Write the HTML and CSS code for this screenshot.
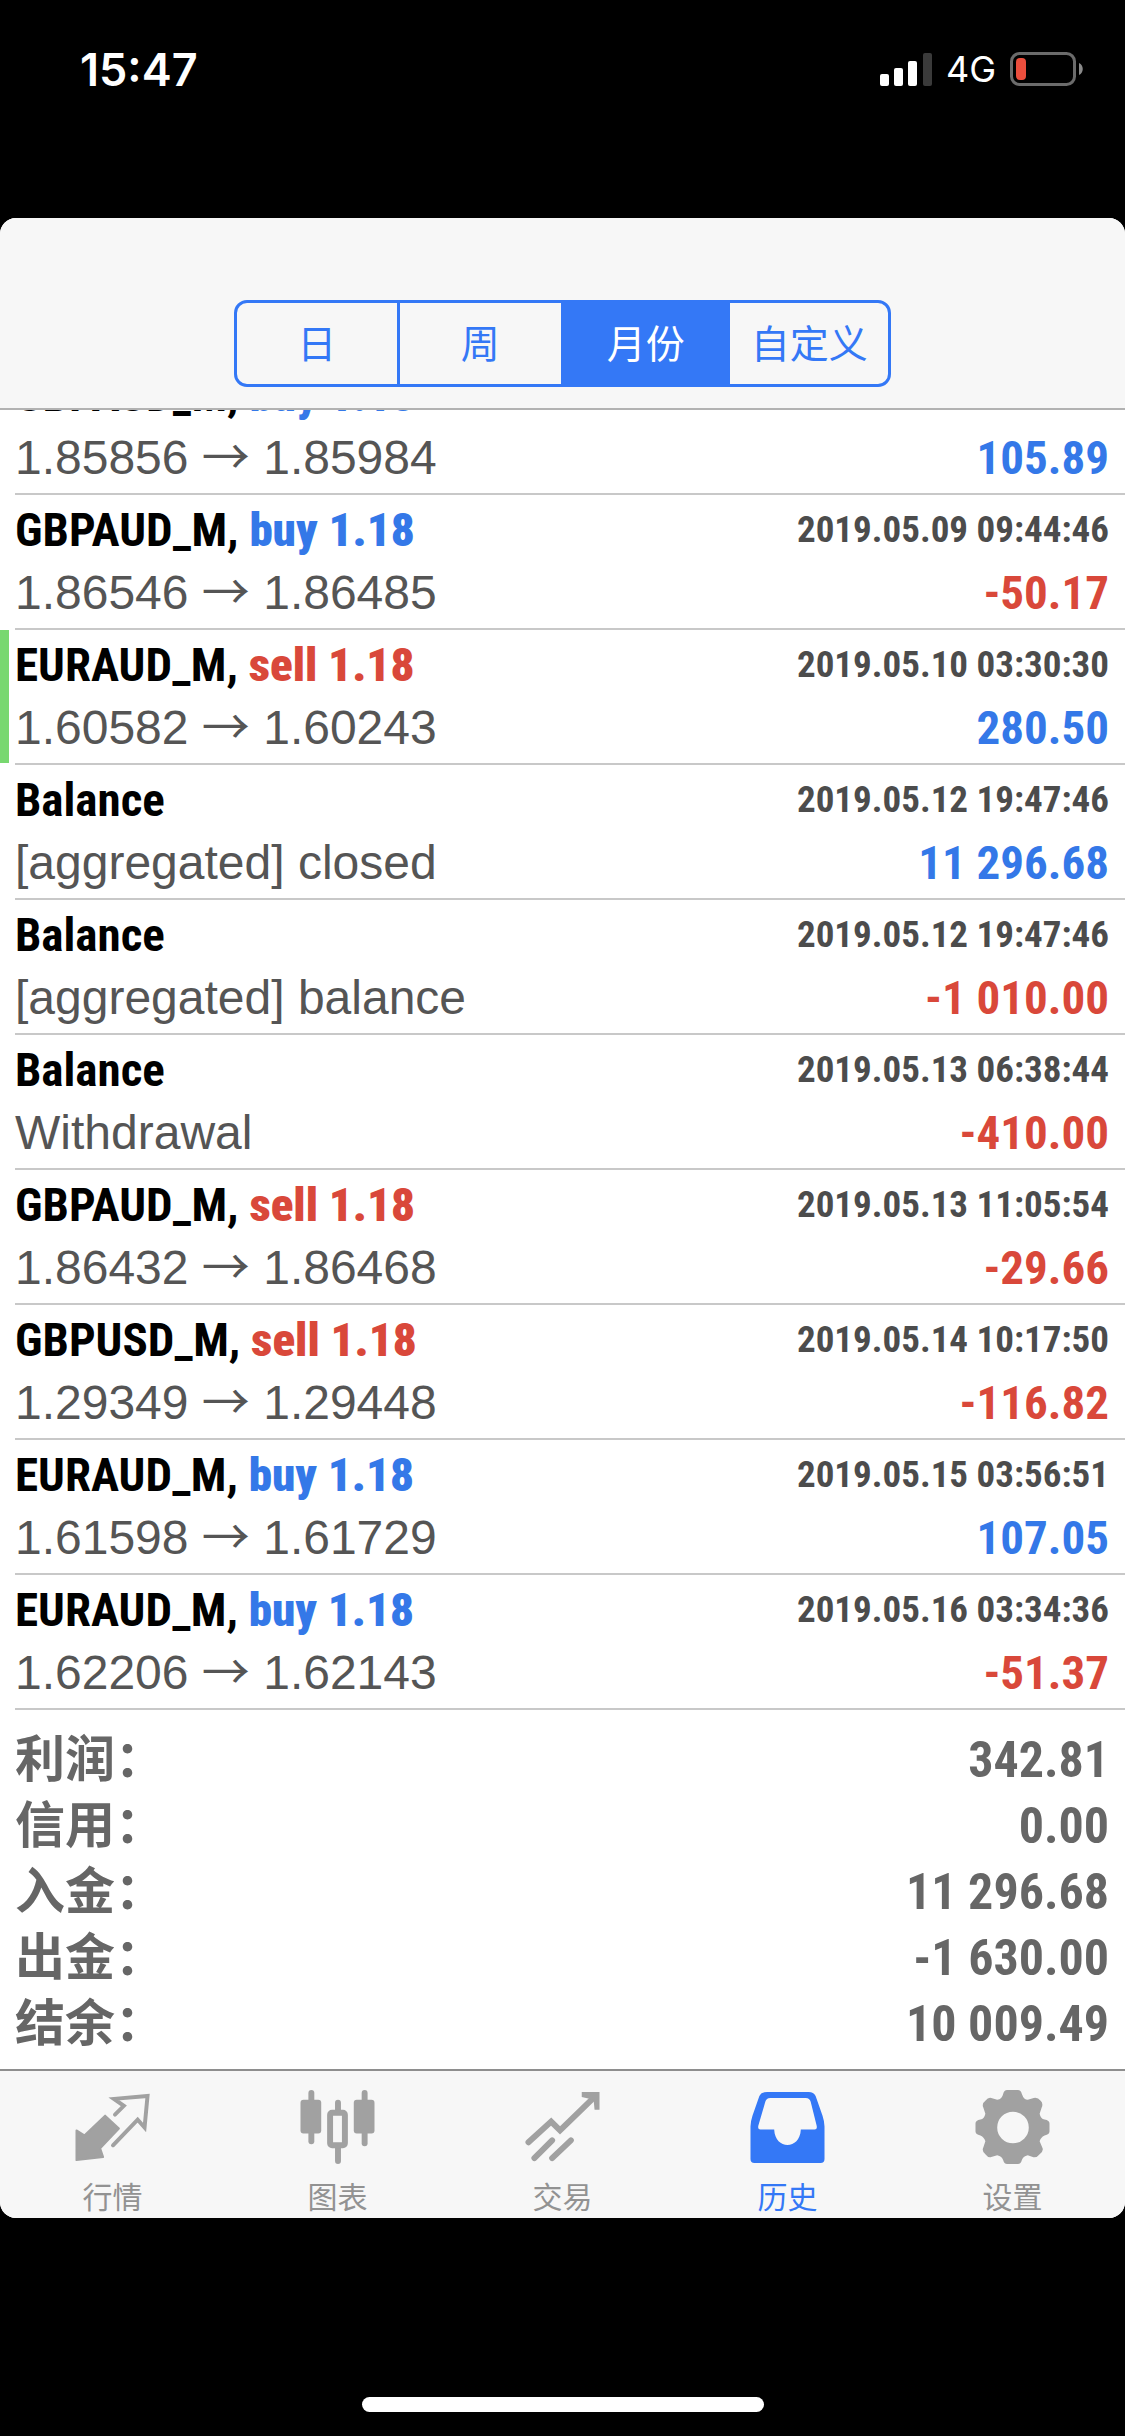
FILE: index.html
```html
<!DOCTYPE html>
<html lang="zh-CN">
<head>
<meta charset="utf-8">
<meta name="viewport" content="width=device-width, initial-scale=1">
<title>历史</title>
<link rel="stylesheet" href="styles.css">
</head>
<body>
<div class="status">
  <time class="clock">15:47</time>
  <div class="status-right">
    <svg class="signal" viewBox="0 0 52 33" aria-hidden="true">
      <rect x="0" y="21" width="9" height="12" rx="2" fill="#fff"/>
      <rect x="14" y="15" width="9" height="18" rx="2" fill="#fff"/>
      <rect x="28" y="8" width="9" height="25" rx="2" fill="#fff"/>
      <rect x="43" y="0" width="9" height="33" rx="2" fill="#3a3a3a"/>
    </svg>
    <span class="network">4G</span>
    <svg class="battery" viewBox="0 0 74 34" aria-hidden="true">
      <rect x="1.5" y="1.5" width="63" height="31" rx="8" fill="none" stroke="#6b6b6b" stroke-width="3"/>
      <rect x="6" y="6" width="10" height="22" rx="4" fill="#eb4e3d"/>
      <path d="M69 11c5 2 5 10 0 12z" fill="#8a8a8a"/>
    </svg>
  </div>
</div>

<div class="app">
  <header class="header">
    <div class="segments">
      <button type="button" class="segment">日</button>
      <button type="button" class="segment">周</button>
      <button type="button" class="segment active" aria-pressed="true">月份</button>
      <button type="button" class="segment">自定义</button>
    </div>
  </header>

  <main class="content">
    <ul class="deals">
      <li class="deal"><span class="title">GBPAUD_M, <b class="buy">buy 1.18</b></span><time class="date"></time><span class="detail">1.85856 <span class="arrow">→</span> 1.85984</span><span class="amount buy">105.89</span></li>
      <li class="deal"><span class="title">GBPAUD_M, <b class="buy">buy 1.18</b></span><time class="date">2019.05.09 09:44:46</time><span class="detail">1.86546 <span class="arrow">→</span> 1.86485</span><span class="amount sell">-50.17</span></li>
      <li class="deal take-profit"><span class="title">EURAUD_M, <b class="sell">sell 1.18</b></span><time class="date">2019.05.10 03:30:30</time><span class="detail">1.60582 <span class="arrow">→</span> 1.60243</span><span class="amount buy">280.50</span></li>
      <li class="deal"><span class="title">Balance</span><time class="date">2019.05.12 19:47:46</time><span class="detail">[aggregated] closed</span><span class="amount buy">11 296.68</span></li>
      <li class="deal"><span class="title">Balance</span><time class="date">2019.05.12 19:47:46</time><span class="detail">[aggregated] balance</span><span class="amount sell">-1 010.00</span></li>
      <li class="deal"><span class="title">Balance</span><time class="date">2019.05.13 06:38:44</time><span class="detail">Withdrawal</span><span class="amount sell">-410.00</span></li>
      <li class="deal"><span class="title">GBPAUD_M, <b class="sell">sell 1.18</b></span><time class="date">2019.05.13 11:05:54</time><span class="detail">1.86432 <span class="arrow">→</span> 1.86468</span><span class="amount sell">-29.66</span></li>
      <li class="deal"><span class="title">GBPUSD_M, <b class="sell">sell 1.18</b></span><time class="date">2019.05.14 10:17:50</time><span class="detail">1.29349 <span class="arrow">→</span> 1.29448</span><span class="amount sell">-116.82</span></li>
      <li class="deal"><span class="title">EURAUD_M, <b class="buy">buy 1.18</b></span><time class="date">2019.05.15 03:56:51</time><span class="detail">1.61598 <span class="arrow">→</span> 1.61729</span><span class="amount buy">107.05</span></li>
      <li class="deal"><span class="title">EURAUD_M, <b class="buy">buy 1.18</b></span><time class="date">2019.05.16 03:34:36</time><span class="detail">1.62206 <span class="arrow">→</span> 1.62143</span><span class="amount sell">-51.37</span></li>
    </ul>
    <dl class="totals">
      <div class="total"><dt>利润：</dt><dd>342.81</dd></div>
      <div class="total"><dt>信用：</dt><dd>0.00</dd></div>
      <div class="total"><dt>入金：</dt><dd>11 296.68</dd></div>
      <div class="total"><dt>出金：</dt><dd>-1 630.00</dd></div>
      <div class="total"><dt>结余：</dt><dd>10 009.49</dd></div>
    </dl>
  </main>

  <nav class="tabs">
    <a class="tab" href="#quotes">
      <svg class="icon" viewBox="0 0 75 76" aria-hidden="true">
        <path d="M1 41 9 46 30 26 44 39 25 59 28 68 1 71z" fill="currentColor" stroke="currentColor" stroke-width="2" stroke-linejoin="round"/>
        <path d="M40 25 49 16 39 9 73 6 70 38 63 30 38 56" fill="none" stroke="currentColor" stroke-width="4" stroke-linecap="round"/>
      </svg>
      <span>行情</span>
    </a>
    <a class="tab" href="#charts">
      <svg class="icon" viewBox="0 0 75 76" aria-hidden="true">
        <g fill="currentColor">
          <rect x="8" y="0" width="6" height="55" rx="3"/><rect x="0" y="10" width="21" height="34" rx="3"/>
          <rect x="62" y="0" width="6" height="57" rx="3"/><rect x="54" y="10" width="21" height="34" rx="3"/>
          <rect x="35" y="10" width="6" height="15" rx="3"/><rect x="35" y="54" width="6" height="21" rx="3"/>
        </g>
        <rect x="30" y="23" width="15" height="33" rx="2" fill="none" stroke="currentColor" stroke-width="6"/>
      </svg>
      <span>图表</span>
    </a>
    <a class="tab" href="#trade">
      <svg class="icon" viewBox="0 0 75 76" aria-hidden="true">
        <path d="M3 53 26 32 35 41 71 6M9 69 27 51M27 69 46 51" fill="none" stroke="currentColor" stroke-width="6" stroke-linecap="round"/>
        <path d="M57 2H75V20L70 20 69 10 57 7z" fill="currentColor"/>
      </svg>
      <span>交易</span>
    </a>
    <a class="tab active" href="#history" aria-current="page">
      <svg class="icon" viewBox="0 0 75 76" aria-hidden="true">
        <path fill="currentColor" fill-rule="evenodd" d="M17 2H59Q64 2 66 6L73 26Q75 32 75 37V70Q75 74 71 74H4Q0 74 0 70V37Q0 32 2 26L9 6Q11 2 17 2zM20 8Q16 8 15 12L8 36Q7 40 10 40H24C25 61 50 61 51 40H65Q68 40 67 36L61 12Q60 8 56 8z"/>
      </svg>
      <span>历史</span>
    </a>
    <a class="tab" href="#settings">
      <svg class="icon" viewBox="0 0 75 76" aria-hidden="true">
        <path fill="currentColor" fill-rule="evenodd" d="M32 0H43Q46 0 47 4Q49 10 53 10L59 8Q63 7 66 11Q69 14 67 18L65 24Q66 29 70 30Q75 31 75 34V42Q75 45 70 46Q66 48 65 52L68 59Q69 62 65 65Q62 69 58 68L53 66Q48 67 47 71Q46 75 43 75H32Q29 75 28 71Q27 67 22 66L16 68Q13 69 10 65Q6 62 8 58L10 52Q9 48 5 46Q0 45 0 42V34Q0 31 5 30Q9 29 10 24L8 18Q6 14 10 11Q13 7 16 8L22 10Q27 9 28 4Q29 0 32 0zM38 22A16 16 0 1 0 38 54A16 16 0 1 0 38 22z"/>
      </svg>
      <span>设置</span>
    </a>
  </nav>
</div>

<div class="home-indicator"></div>
</body>
</html>
```
FILE: styles.css
```css
* {
  box-sizing: border-box;
}

body {
  margin: 0;
  min-height: 100vh;
  display: flex;
  flex-direction: column;
  background: #000;
  font-family: "Liberation Sans", "Noto Sans CJK SC", sans-serif;
}

.status {
  display: flex;
  justify-content: space-between;
  align-items: center;
  height: 138px;
  margin-bottom: 80px;
  padding: 0 41px 0 80px;
  color: #fff;
  font-family: Inter, sans-serif;
}

.clock {
  font-size: 45px;
  font-weight: 600;
}

.status-right {
  display: flex;
  align-items: center;
  gap: 14px;
}

.signal {
  width: 52px;
  height: 33px;
}

.network {
  font-size: 36px;
  font-weight: 400;
}

.battery {
  width: 74px;
  height: 34px;
}

.app {
  overflow: hidden;
  border-radius: 16px;
  background: #fff;
}

.header {
  position: relative;
  z-index: 1;
  display: flex;
  justify-content: center;
  padding: 82px 0 21px;
  background: #f7f7f7;
  border-bottom: 2px solid #b2b2b2;
}

.segments {
  display: grid;
  grid-template-columns: 160fr 165fr 167fr 161fr;
  width: 58.4%;
  overflow: hidden;
  border: 3px solid #3478f6;
  border-radius: 13px;
}

.segment {
  height: 81px;
  padding: 0 0 5px;
  border: 0;
  border-left: 3px solid #3478f6;
  background: none;
  color: #3478f6;
  font: inherit;
  font-size: 39px;
}

.segment:first-child {
  border-left: 0;
}

.segment.active {
  background: #3478f6;
  color: #fff;
}

.content {
  margin-top: -50px;
}

.deals {
  margin: 0;
  padding: 0;
  list-style: none;
}

.deal {
  position: relative;
  display: grid;
  grid-template-columns: auto auto;
  grid-template-rows: 63px 62px;
  justify-content: space-between;
  height: 135px;
  margin-left: 15px;
  padding: 4px 16px 0 0;
  border-bottom: 2px solid #c8c8c8;
  line-height: 62px;
}

.take-profit::before {
  content: "";
  position: absolute;
  top: 0;
  bottom: 0;
  left: -15px;
  width: 9px;
  background: #78d870;
}

.title,
.amount,
.date,
.total dd {
  font-family: "Roboto Condensed", "Liberation Sans Narrow", sans-serif;
  font-weight: 700;
}

.title {
  color: #000;
  font-size: 47px;
}

.date {
  color: #4c4c4c;
  font-size: 37px;
}

.detail {
  color: #555;
  font-size: 48px;
}

.arrow {
  font-family: "Noto Sans CJK SC", sans-serif;
  line-height: 1;
}

.amount {
  font-size: 47px;
}

.detail,
.amount {
  align-self: baseline;
}

.date,
.amount {
  text-align: right;
}

.buy {
  color: #3478e8;
}

.sell {
  color: #d9483a;
}

.totals {
  margin: 0;
  padding: 17px 16px 12px 15px;
  color: #666;
  line-height: 66px;
}

.total {
  display: flex;
  justify-content: space-between;
  height: 66px;
}

.total dt {
  font-size: 50px;
  font-weight: 700;
}

.total dd {
  margin: 0;
  font-size: 50px;
}

.tabs {
  display: grid;
  grid-template-columns: repeat(5, 1fr);
  border-top: 2px solid #8e8e8e;
  background: #f7f7f7;
}

.tab {
  display: flex;
  flex-direction: column;
  align-items: center;
  gap: 13px;
  height: 147px;
  padding-top: 19px;
  color: #a1a1a1;
  font-size: 30px;
  line-height: 40px;
  text-decoration: none;
}

.tab span {
  color: #929292;
}

.tab.active,
.tab.active span {
  color: #3478f6;
}

.icon {
  width: 75px;
  height: 76px;
}

.home-indicator {
  width: 402px;
  height: 15px;
  margin: auto auto 24px;
  border-radius: 8px;
  background: #fff;
}
```
